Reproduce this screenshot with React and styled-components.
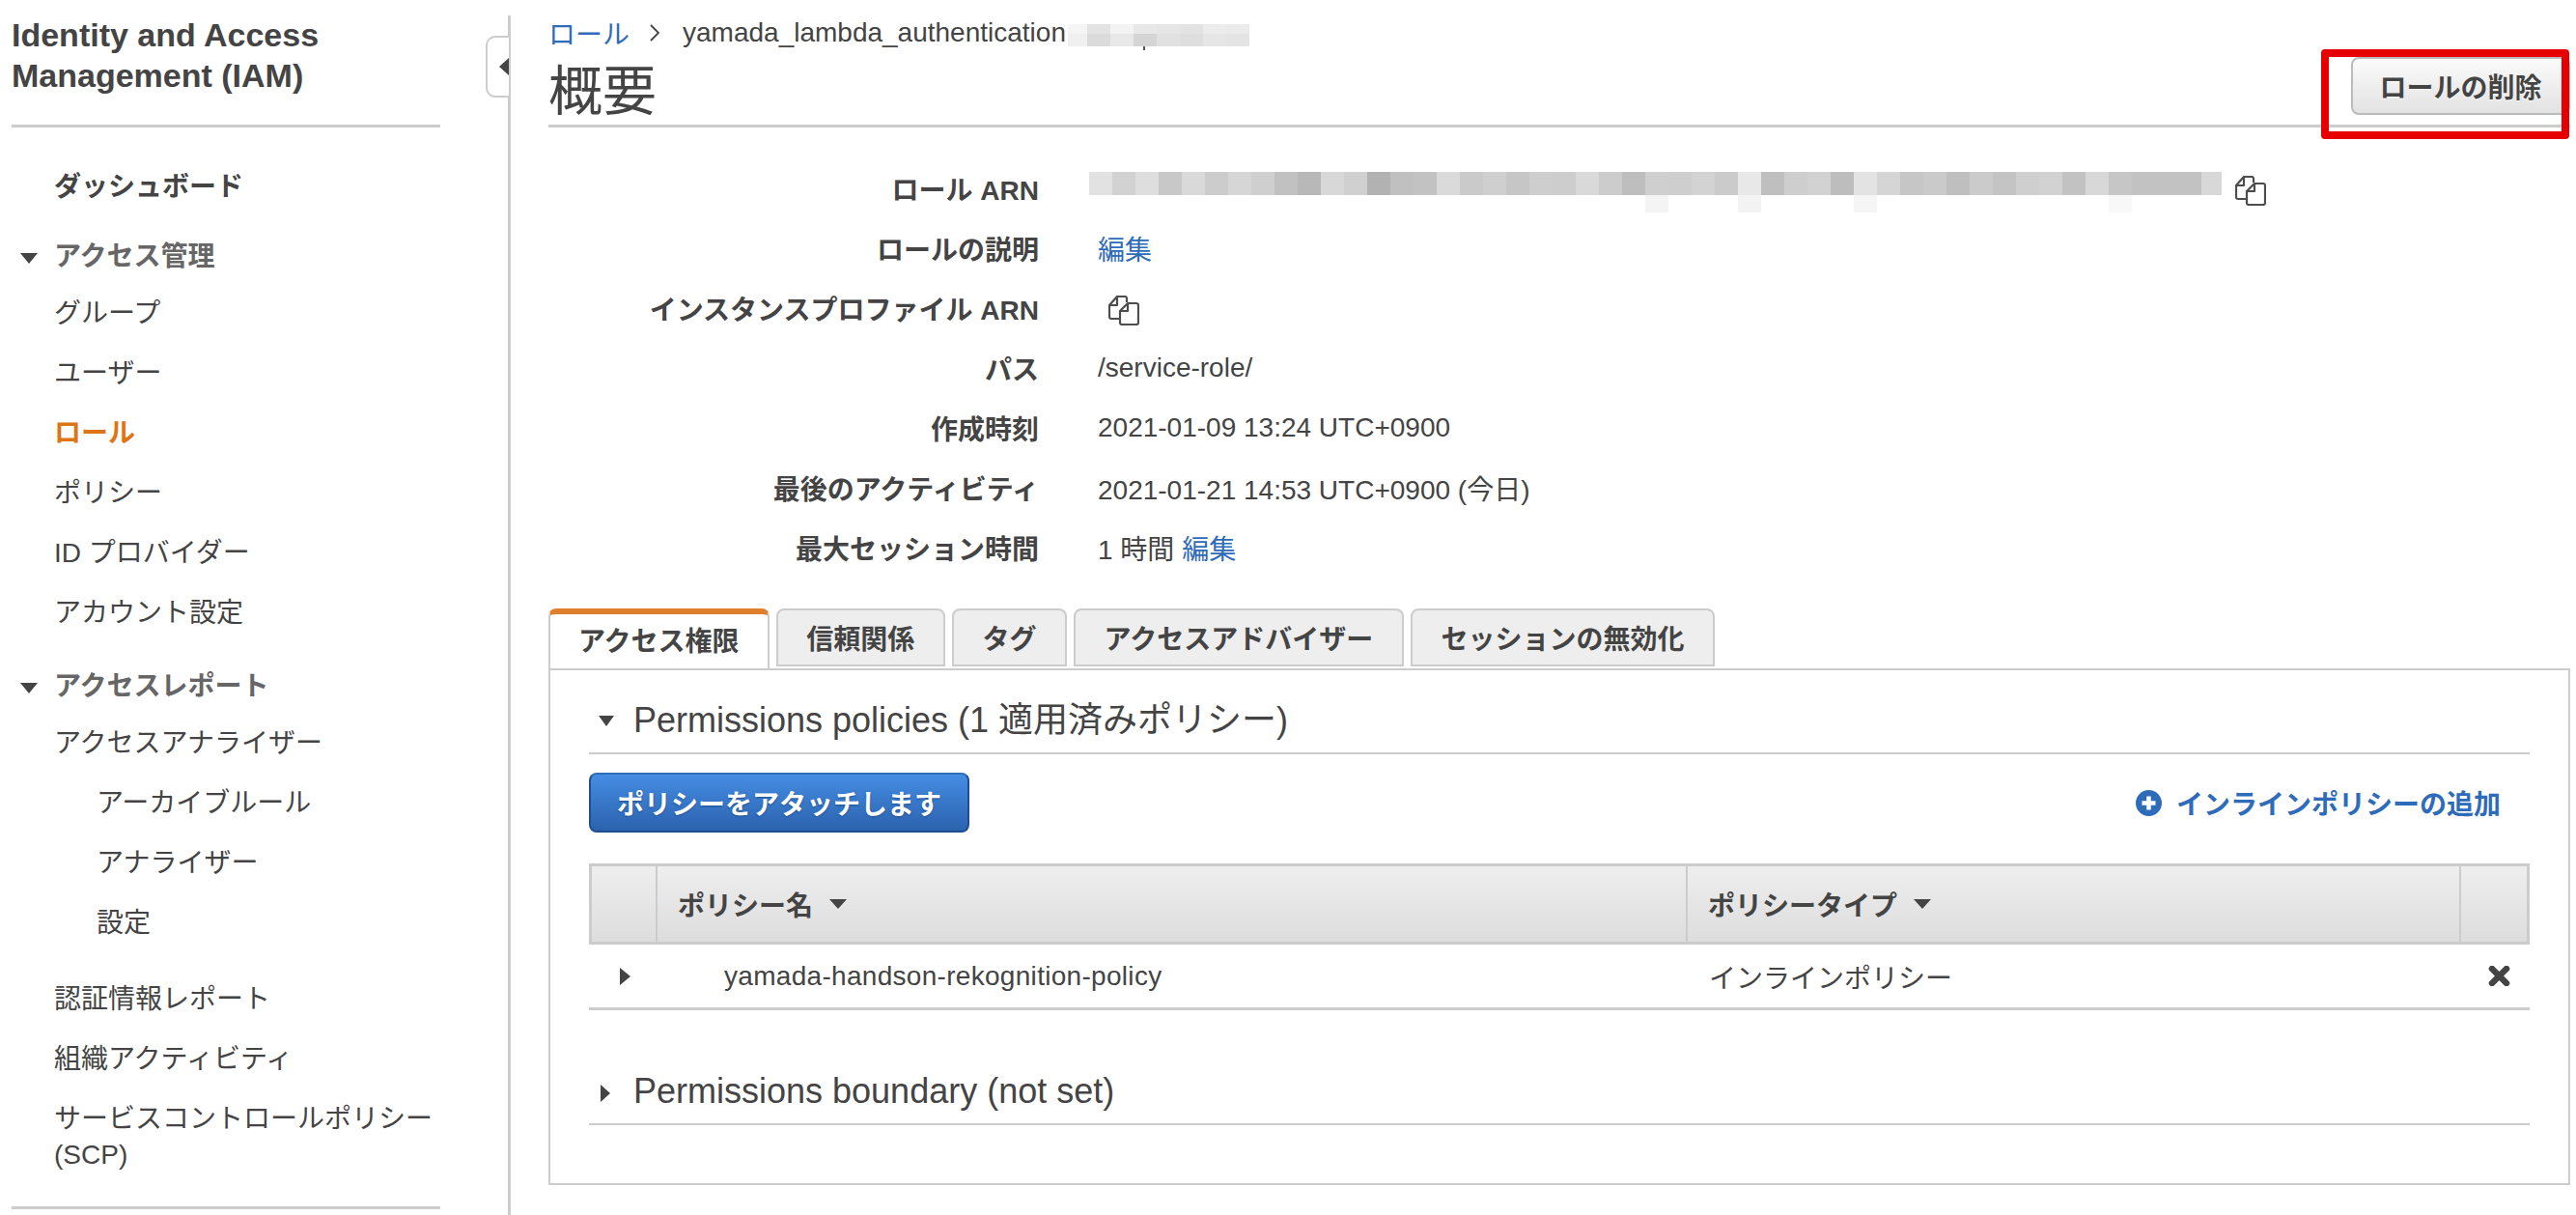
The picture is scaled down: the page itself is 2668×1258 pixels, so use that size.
import React from "react";
import styled, { createGlobalStyle } from "styled-components";

const arnPixels = [
  "e2", "d2", "de", "c8", "d9", "cc", "d6", "cf", "c1", "b8", "d8", "d0", "b2", "c0", "c2", "da", "ca",
  "cf", "c6", "ce", "cd", "d9", "cc", "be", "cf", "ce", "d3", "cb", "e8", "bf", "ce", "d2", "bd", "e3",
  "d5", "c6", "ca", "bf", "cb", "c4", "cf", "d2", "c2", "d8", "c6", "c2", "c2", "c2", "d8",
];
const arnFaint = { 24: "f4", 28: "f3", 33: "f5", 44: "f8" };
const crumbPixels = [
  "f5", "e3", "f3", "e8", "e6", "e3", "ec", "eb",
  "f0", "db", "e8", "d5", "e1", "de", "e6", "e4",
];

const tabs = ["アクセス権限", "信頼関係", "タグ", "アクセスアドバイザー", "セッションの無効化"];

const App = () => {
  const details = [
    { label: "ロールの説明", value: <Link>編集</Link> },
    { label: "インスタンスプロファイル ARN", value: <CopyOffset><CopyIcon /></CopyOffset> },
    { label: "パス", value: "/service-role/" },
    { label: "作成時刻", value: "2021-01-09 13:24 UTC+0900" },
    { label: "最後のアクティビティ", value: "2021-01-21 14:53 UTC+0900 (今日)" },
    { label: "最大セッション時間", value: <>1 時間 <Link>編集</Link></> },
  ];

  return (
    <>
      <GlobalStyle />
      <Shell>
        <Sidebar>
          <SideTitle>Identity and Access Management (IAM)</SideTitle>
          <SideRule />
          <NavList>
            <Dashboard>ダッシュボード</Dashboard>
            <NavHeading><Caret $dir="down" $w={18} $h={11} />アクセス管理</NavHeading>
            <NavItem>グループ</NavItem>
            <NavItem>ユーザー</NavItem>
            <NavItem $active>ロール</NavItem>
            <NavItem>ポリシー</NavItem>
            <NavItem>ID プロバイダー</NavItem>
            <NavItem>アカウント設定</NavItem>
            <NavHeading $later><Caret $dir="down" $w={18} $h={11} />アクセスレポート</NavHeading>
            <NavItem>アクセスアナライザー</NavItem>
            <NavItem $sub>アーカイブルール</NavItem>
            <NavItem $sub>アナライザー</NavItem>
            <NavItem $sub>設定</NavItem>
            <NavItem $gap>認証情報レポート</NavItem>
            <NavItem>組織アクティビティ</NavItem>
            <NavItem $wrap>サービスコントロールポリシー (SCP)</NavItem>
          </NavList>
          <SideRule />
        </Sidebar>
        <Toggle>
          <Caret $dir="left" $w={10} $h={18} />
        </Toggle>
        <Main>
          <PageHeader>
            <TitleBlock>
              <Crumbs>
                <Link>ロール</Link>
                <CrumbSep>
                  <svg width="12" height="20" viewBox="0 0 12 20">
                    <path d="M2 2l8 8-8 8" fill="none" stroke="#444" strokeWidth="1.8" />
                  </svg>
                </CrumbSep>
                yamada_lambda_authentication
                <CrumbBlur>
                  {crumbPixels.map((c, i) => (
                    <Pixel key={i} style={{ background: `#${c}${c}${c}` }} />
                  ))}
                </CrumbBlur>
              </Crumbs>
              <PageTitle>概要</PageTitle>
            </TitleBlock>
            <DeleteButton>ロールの削除</DeleteButton>
          </PageHeader>
          <Highlight />

          <Details>
            <DetailLabel>ロール ARN</DetailLabel>
            <ArnValue>
              <ArnBlur>
                {arnPixels.map((c, i) => (
                  <Pixel key={i} style={{ background: `#${c}${c}${c}` }} />
                ))}
                {arnPixels.map((_, i) => {
                  const f = arnFaint[i] || "ff";
                  return <Pixel key={i} style={{ background: `#${f}${f}${f}` }} />;
                })}
              </ArnBlur>
              <CopyIcon />
            </ArnValue>
            {details.map((d) => (
              <React.Fragment key={d.label}>
                <DetailLabel>{d.label}</DetailLabel>
                <DetailValue>{d.value}</DetailValue>
              </React.Fragment>
            ))}
          </Details>

          <TabBar>
            {tabs.map((t, i) => (
              <Tab key={t} $active={i === 0}>{t}</Tab>
            ))}
          </TabBar>
          <Panel>
            <SectionHead>
              <SectionCaret><Caret $dir="down" $w={17} $h={11} /></SectionCaret>
              Permissions policies (1 適用済みポリシー)
            </SectionHead>
            <Toolbar>
              <AttachButton>ポリシーをアタッチします</AttachButton>
              <AddInline>
                <PlusIcon />
                インラインポリシーの追加
              </AddInline>
            </Toolbar>
            <TableHead>
              <HeadCell />
              <HeadCell>ポリシー名<Caret $dir="down" $w={18} $h={10} /></HeadCell>
              <HeadCell>ポリシータイプ<Caret $dir="down" $w={18} $h={10} /></HeadCell>
              <HeadCell $last />
            </TableHead>
            <TableRow>
              <ExpandCell><Caret $dir="right" $w={11} $h={18} /></ExpandCell>
              <NameCell>yamada-handson-rekognition-policy</NameCell>
              <TypeCell>インラインポリシー</TypeCell>
              <RemoveCell>
                <svg width="23" height="21" viewBox="0 0 23 21">
                  <path d="M4 3l15 15M19 3L4 18" stroke="#444" strokeWidth="6.5" strokeLinecap="round" />
                </svg>
              </RemoveCell>
            </TableRow>
            <BoundaryHead>
              <SectionCaret><Caret $dir="right" $w={10} $h={18} /></SectionCaret>
              Permissions boundary (not set)
            </BoundaryHead>
          </Panel>
        </Main>
      </Shell>
    </>
  );
};

const CopyIcon = () => (
  <CopySvg width="32" height="31" viewBox="0 0 32 31" fill="none" stroke="#4d4d4d" strokeWidth="2.2" strokeLinejoin="round">
    <path d="M11 24H3a2 2 0 0 1-2-2V10l8-9h8a2 2 0 0 1 2 2v4" />
    <path d="M1.5 10H9V1.5" />
    <path d="M12 16l8-8h9a2 2 0 0 1 2 2v18a2 2 0 0 1-2 2H14a2 2 0 0 1-2-2z" />
    <path d="M12.5 16H20V8.5" />
  </CopySvg>
);

const PlusIcon = () => (
  <svg width="27" height="27" viewBox="0 0 27 27">
    <circle cx="13.5" cy="13.5" r="13.5" fill="#2e6bb8" />
    <path d="M13.5 6.5v14M6.5 13.5h14" stroke="#fff" strokeWidth="4.5" />
  </svg>
);

const GlobalStyle = createGlobalStyle`
  html, body {
    margin: 0;
    height: 100%;
    background: #fff;
  }
  body {
    font-family: "Liberation Sans", "Noto Sans CJK JP", sans-serif;
    font-size: 28px;
    color: #444;
    overflow: hidden;
  }
`;

const Shell = styled.div`
  position: relative;
  display: flex;
  width: 2668px;
  height: 1258px;
  overflow: hidden;
`;

const Sidebar = styled.aside`
  flex: 0 0 526px;
  box-sizing: border-box;
  padding: 15px 70px 0 12px;
`;

const SideTitle = styled.h2`
  margin: 0 0 30px;
  font-size: 34px;
  line-height: 42px;
  font-weight: 700;
  color: #444;
`;

const SideRule = styled.div`
  height: 3px;
  background: #ccc;
`;

const NavList = styled.nav`
  padding: 30px 0 35px 44px;
  display: flex;
  flex-direction: column;
`;

const Dashboard = styled.div`
  height: 67px;
  line-height: 64px;
  font-weight: 700;
  color: #444;
`;

const NavHeading = styled.div`
  position: relative;
  height: 56px;
  line-height: 56px;
  margin-top: ${(p) => (p.$later ? "17px" : "9px")};
  font-weight: 700;
  color: #666;

  & > span {
    position: absolute;
    left: -35px;
    top: 24px;
  }
`;

const NavItem = styled.div`
  min-height: 62px;
  line-height: ${(p) => (p.$wrap ? "37px" : "62px")};
  padding-left: ${(p) => (p.$sub ? "44px" : "0")};
  padding-top: ${(p) => (p.$wrap ? "12px" : "0")};
  margin-top: ${(p) => (p.$gap ? "17px" : "0")};
  color: ${(p) => (p.$active ? "#dd7517" : "#444")};
  font-weight: ${(p) => (p.$active ? 700 : 400)};
`;

const Caret = styled.span`
  display: inline-block;
  width: 0;
  height: 0;
  border-style: solid;
  border-color: transparent;
  ${(p) => p.$dir === "down" && `
    border-width: ${p.$h}px ${p.$w / 2}px 0;
    border-top-color: #444;
  `}
  ${(p) => p.$dir === "right" && `
    border-width: ${p.$h / 2}px 0 ${p.$h / 2}px ${p.$w}px;
    border-left-color: #444;
  `}
  ${(p) => p.$dir === "left" && `
    border-width: ${p.$h / 2}px ${p.$w}px ${p.$h / 2}px 0;
    border-right-color: #444;
  `}
`;

const Toggle = styled.div`
  position: absolute;
  left: 503px;
  top: 37px;
  width: 24px;
  height: 64px;
  box-sizing: border-box;
  background: #fff;
  border: 2px solid #ccc;
  border-right: 0;
  border-radius: 10px 0 0 10px;
  display: flex;
  align-items: center;
  justify-content: flex-end;
  z-index: 2;
`;

const Main = styled.main`
  position: relative;
  flex: 1;
  box-sizing: border-box;
  margin-top: 16px;
  padding: 0 6px 0 39px;
  border-left: 3px solid #ccc;
`;

const PageHeader = styled.header`
  display: flex;
  justify-content: space-between;
  align-items: flex-end;
  height: 116px;
  box-sizing: border-box;
  padding-bottom: 10px;
  border-bottom: 3px solid #ccc;
`;

const TitleBlock = styled.div`
  align-self: flex-start;
`;

const Crumbs = styled.div`
  display: flex;
  align-items: center;
  height: 40px;
  margin-top: -2px;
  color: #444;
`;

const CrumbSep = styled.span`
  display: inline-flex;
  margin: 0 23px 0 20px;
`;

const CrumbBlur = styled.span`
  position: relative;
  display: grid;
  grid-template-columns: 20px repeat(7, 24px);
  grid-template-rows: 10px 13px;
  margin: 4px 0 0 2px;

  &::after {
    content: "";
    position: absolute;
    left: 78px;
    top: 23px;
    width: 2px;
    height: 4px;
    background: #555;
  }
`;

const Pixel = styled.span`
  display: block;
`;

const PageTitle = styled.h1`
  margin: 11px 0 0;
  font-size: 56px;
  line-height: 60px;
  font-weight: 400;
  color: #444;
`;

const DeleteButton = styled.button`
  box-sizing: border-box;
  width: 227px;
  height: 60px;
  padding: 0;
  font: inherit;
  font-weight: 700;
  color: #444;
  text-shadow: 0 1px 1px #fff;
  background: linear-gradient(#fbfbfb, #e2e2e2);
  border: 2px solid #bbb;
  border-radius: 8px;
`;

const Highlight = styled.div`
  position: absolute;
  top: 35px;
  right: 7px;
  box-sizing: border-box;
  width: 257px;
  height: 93px;
  border: 8px solid #e60000;
  border-radius: 4px;
  pointer-events: none;
`;

const Details = styled.section`
  display: grid;
  grid-template-columns: 508px 1fr;
  grid-auto-rows: 62px;
  column-gap: 61px;
  padding-top: 32px;
  align-items: center;
`;

const DetailLabel = styled.div`
  text-align: right;
  font-weight: 700;
  color: #444;
`;

const DetailValue = styled.div`
  color: #444;
`;

const ArnValue = styled.div`
  display: flex;
  gap: 14px;
  align-items: flex-start;
  margin-left: -9px;
  align-self: start;
  padding-top: 14px;
`;

const ArnBlur = styled.div`
  display: grid;
  grid-template-columns: repeat(48, 24px) 21px;
  grid-template-rows: 24px 18px;
  height: 42px;
`;

const CopySvg = styled.svg`
  display: block;
  flex: none;
  margin-top: 4px;
`;

const CopyOffset = styled.span`
  display: block;
  margin-left: 11px;
`;

const Link = styled.a`
  color: #2e6bb8;
`;

const TabBar = styled.div`
  display: flex;
  gap: 7px;
  margin-top: 32px;
  position: relative;
  z-index: 1;
`;

const Tab = styled.div`
  box-sizing: border-box;
  height: ${(p) => (p.$active ? "62px" : "60px")};
  padding: ${(p) => (p.$active ? "0 29px 4px" : "0 29.6px")};
  display: flex;
  align-items: center;
  font-weight: 700;
  background: ${(p) => (p.$active ? "#fff" : "#eee")};
  border: 2px solid #ccc;
  border-bottom: ${(p) => (p.$active ? "0" : "2px solid #ccc")};
  border-top: ${(p) => (p.$active ? "6px solid #dd7f2c" : "2px solid #ccc")};
  border-radius: 8px 8px 0 0;
`;

const Panel = styled.section`
  box-sizing: border-box;
  height: 535px;
  padding: 0 40px;
  border: 2px solid #ccc;
`;

const SectionHead = styled.h3`
  position: relative;
  margin: 0;
  padding: 25px 0 6px 46px;
  font-size: 36px;
  line-height: 54px;
  font-weight: 400;
  border-bottom: 2px solid #ccc;
`;

const SectionCaret = styled.span`
  position: absolute;
  left: 10px;
  top: 47px;
  display: flex;
`;

const BoundaryHead = styled(SectionHead)`
  margin-top: 57px;
  padding-top: 0;
  padding-bottom: 6px;

  & > ${SectionCaret} {
    left: 12px;
    top: 20px;
  }
`;

const Toolbar = styled.div`
  display: flex;
  justify-content: space-between;
  align-items: center;
  margin-top: 19px;
  padding-right: 30px;
`;

const AttachButton = styled.button`
  box-sizing: border-box;
  width: 394px;
  height: 62px;
  padding: 0;
  font: inherit;
  font-weight: 700;
  color: #fff;
  text-shadow: 0 1px 2px #1d4d8c;
  background: linear-gradient(#458de3, #2b62ae);
  border: 2px solid #1f4f8f;
  border-top-color: #2f6cb9;
  border-radius: 8px;
`;

const AddInline = styled.a`
  display: flex;
  align-items: center;
  gap: 15px;
  font-weight: 700;
  color: #2e6bb8;
`;

const TableHead = styled.div`
  display: grid;
  grid-template-columns: 68px 1067px 801px 1fr;
  box-sizing: border-box;
  height: 84px;
  margin-top: 32px;
  background: linear-gradient(#eee, #ddd);
  border: 3px solid #ccc;
`;

const HeadCell = styled.div`
  display: flex;
  align-items: center;
  gap: 17px;
  padding-left: 21px;
  font-weight: 700;
  border-right: ${(p) => (p.$last ? "0" : "2px solid #ccc")};
`;

const TableRow = styled.div`
  display: grid;
  grid-template-columns: 71px 1067px 801px 1fr;
  align-items: center;
  box-sizing: border-box;
  height: 68px;
  border-bottom: 3px solid #ccc;
`;

const ExpandCell = styled.div`
  display: flex;
  padding-left: 32px;
`;

const NameCell = styled.div`
  padding-left: 69px;
  letter-spacing: 0.3px;
`;

const TypeCell = styled.div`
  padding-left: 22px;
`;

const RemoveCell = styled.div`
  display: flex;
  padding-left: 28px;
`;

export default App;
